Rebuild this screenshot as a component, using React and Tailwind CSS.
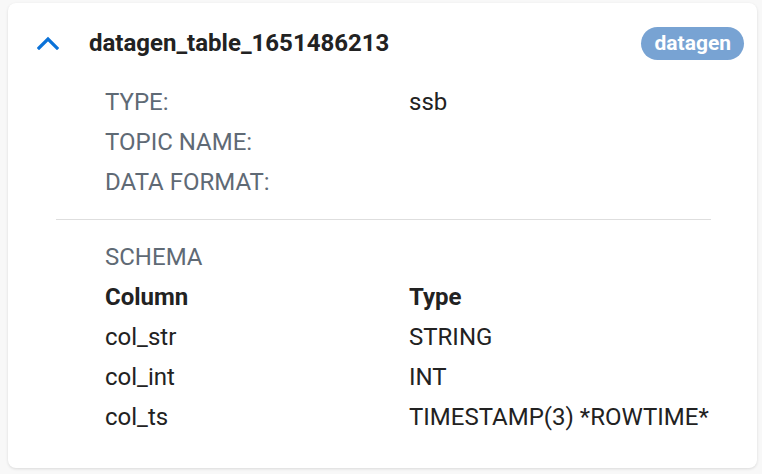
const details = [
  { label: "TYPE:", value: "ssb" },
  { label: "TOPIC NAME:", value: "" },
  { label: "DATA FORMAT:", value: "" },
];

const columns = [
  { name: "col_str", type: "STRING" },
  { name: "col_int", type: "INT" },
  { name: "col_ts", type: "TIMESTAMP(3) *ROWTIME*" },
];

const ChevronUp = () => (
  <svg width="22" height="14" viewBox="0 0 22 14" fill="none">
    <path d="M2 12 L11 3 L20 12" stroke="#0b72d8" strokeWidth="3.2" strokeLinecap="square" />
  </svg>
);

export default function App() {
  return (
    <div className="min-h-[474px] bg-[#f8f8f8] pl-2 pt-[3px] font-['Roboto',sans-serif]">
      <div className="w-[749px] h-[465px] rounded-lg bg-white pt-5 shadow-[0_1px_3px_rgba(0,0,0,0.12)]">
        <div className="flex items-center h-10 pl-[29px] pr-[13px]">
          <ChevronUp />
          <h2 className="ml-[30px] text-[24px] font-bold text-[#222] leading-10">datagen_table_1651486213</h2>
          <span className="ml-auto h-[33px] px-[13px] rounded-full bg-[#78a3d3] text-white text-[21px] font-bold leading-[33px]">
            datagen
          </span>
        </div>

        <div className="mt-[19px] pl-[97px] text-[24px] leading-10">
          {details.map((d) => (
            <div key={d.label} className="grid grid-cols-[304px_1fr]">
              <span className="text-[#5f6a75]">{d.label}</span>
              <span className="text-[#222]">{d.value}</span>
            </div>
          ))}
        </div>

        <div className="ml-[48px] mr-[46px] my-[17px] h-px bg-[#dedede]" />

        <div className="pl-[97px] text-[24px] leading-10">
          <div className="text-[#5f6a75]">SCHEMA</div>
          <div className="grid grid-cols-[304px_1fr] font-bold text-[#222]">
            <span>Column</span>
            <span>Type</span>
          </div>
          {columns.map((c) => (
            <div key={c.name} className="grid grid-cols-[304px_1fr] text-[#222]">
              <span>{c.name}</span>
              <span>{c.type}</span>
            </div>
          ))}
        </div>
      </div>
    </div>
  );
}
